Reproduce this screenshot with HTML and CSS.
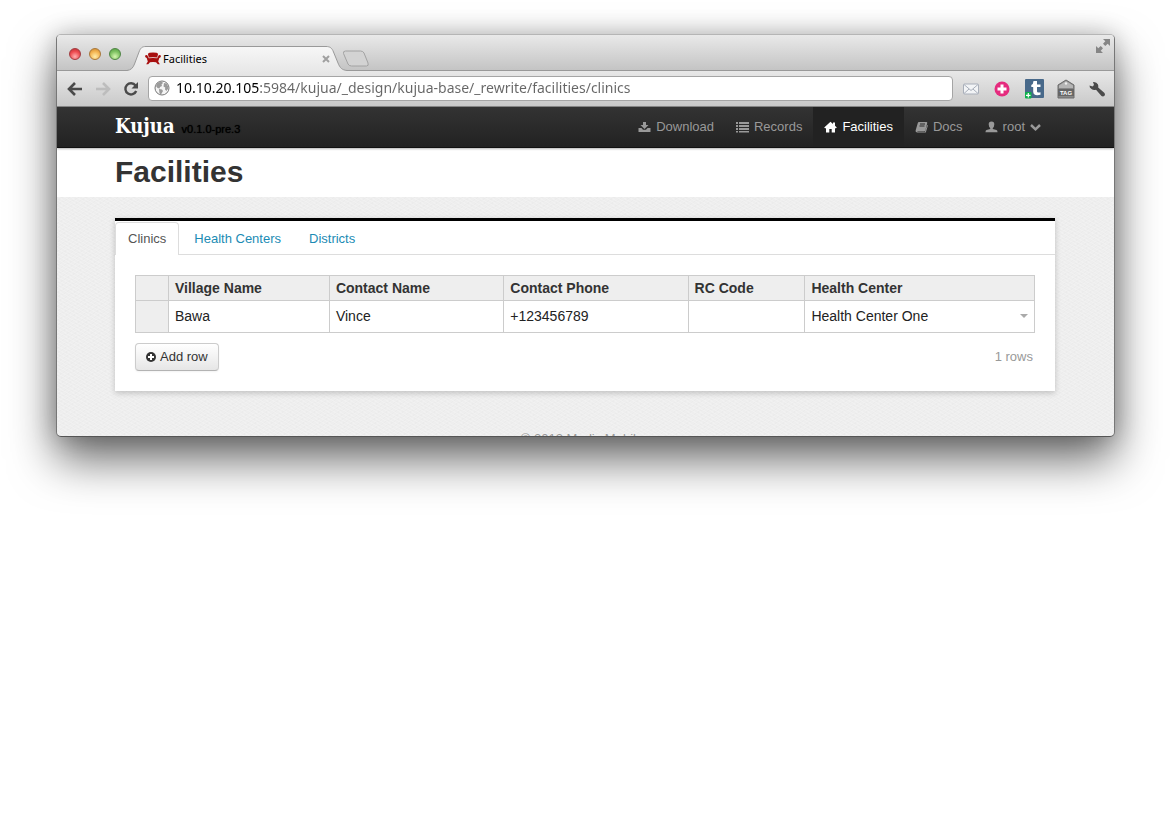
FILE: index.html
```html
<!DOCTYPE html>
<html lang="en">
<head>
<meta charset="utf-8">
<title>Facilities</title>
<link rel="stylesheet" href="styles.css">
</head>
<body>
<div class="window">
  <div class="titlebar">
    <div class="lights">
      <button class="light red" aria-label="Close window"></button>
      <button class="light yellow" aria-label="Minimize window"></button>
      <button class="light green" aria-label="Zoom window"></button>
    </div>
    <div class="tab">
      <svg class="tab-shape" width="220" height="25" viewBox="0 0 220 25" aria-hidden="true">
        <defs><linearGradient id="tabfill" x1="0" y1="0" x2="0" y2="1"><stop offset="0" stop-color="#f7f7f7"/><stop offset="1" stop-color="#e8e8e8"/></linearGradient></defs>
        <path d="M0 24.500C4 24 6 22 7.500 18L12 6C13.500 2 15 .5 19 .5H199C203 .5 205 2 206.500 6L211 17C213 22 215 24 220 24.500V25H0Z" fill="url(#tabfill)"/>
        <path d="M0 24.500C4 24 6 22 7.500 18L12 6C13.500 2 15 .5 19 .5H199C203 .5 205 2 206.500 6L211 17C213 22 215 24 220 24.500" fill="none" stroke="#999"/>
      </svg>
      <svg class="favicon" width="16" height="13" viewBox="0 0 16 13" aria-hidden="true">
        <path fill="#a81010" d="M3 2.500Q3 1 4.500 .8Q8 .2 11.500 .8Q13 1 13 2.500L12.200 5.500Q8 4.800 3.800 5.500Z"/>
        <path fill="#a81010" d="M0 4Q.5 2.800 2.300 3.200L3.800 6.300Q8 5.500 12.200 6.300L13.700 3.200Q15.500 2.800 16 4Q16 5.500 14.300 6L13.200 9.500L14.800 12.300H12.800L11 10.300Q8 9.700 5 10.300L3.200 12.300H1.200L2.800 9.500L1.700 6Q0 5.500 0 4Z"/>
      </svg>
      <span class="tab-title">Facilities</span>
      <button class="tab-close" aria-label="Close tab"><svg width="8" height="8" viewBox="0 0 8 8"><path d="M1 1L7 7M7 1L1 7" stroke="#a0a0a0" stroke-width="2"/></svg></button>
    </div>
    <button class="newtab" aria-label="New tab"><svg width="28" height="17" viewBox="0 0 28 17"><path d="M3.500 1H18.500Q21 1 22 3L26 13Q27 16 24.500 16H9.500Q7 16 6 14L1.500 3.500Q1 1 3.500 1Z" fill="#d3d3d3" stroke="#a2a2a2"/></svg></button>
    <button class="fullscreen" aria-label="Full screen"><svg width="16" height="16" viewBox="0 0 16 16" fill="#858585"><path d="M8 1H15V8L12.700 5.700L10.300 8L8 5.700L10.300 3.300Z"/><path d="M1 8L3.300 10.300L5.700 8L8 10.300L5.700 12.700L8 15H1Z"/></svg></button>
  </div>

  <div class="toolbar">
    <div class="history">
      <button aria-label="Back"><svg width="16" height="14" viewBox="0 0 16 14" fill="none" stroke="#4a4a4a" stroke-width="2.600"><path d="M8 1L2 7L8 13M2 7H15"/></svg></button>
      <button aria-label="Forward"><svg width="16" height="14" viewBox="0 0 16 14" fill="none" stroke="#bdbdbd" stroke-width="2.600"><path d="M8 1L14 7L8 13M14 7H1"/></svg></button>
      <button aria-label="Reload"><svg width="16" height="16" viewBox="0 0 16 16"><path d="M12.500 4.500A5.600 5.600 0 1 0 13.200 10" fill="none" stroke="#4a4a4a" stroke-width="2.400"/><path d="M15 1V7.500H8.500Z" fill="#4a4a4a"/></svg></button>
    </div>
    <div class="omnibox">
      <svg width="16" height="16" viewBox="0 0 16 16" aria-hidden="true"><circle cx="8" cy="8" r="7" fill="#f4f4f4" stroke="#777"/><path d="M3 3.500Q5 1.500 8 1.800L9 3L7.500 4.500L8 6L6 7L5.500 8.500L3.500 8L2 6ZM5 9L8 9.500L9 11L7 14.500L5.500 13.500ZM10 3L12.500 3.500L14 6L14.200 8.500L12.500 11L11 9.500L11.200 7.500L9.500 6.500Z" fill="#9b9b9b"/></svg>
      <input class="url" type="text" aria-label="Address" value="10.10.20.105:5984/kujua/_design/kujua-base/_rewrite/facilities/clinics">
    </div>
    <div class="extensions">
      <button aria-label="Mail"><svg width="18" height="18" viewBox="0 0 18 18"><rect x="1.500" y="4" width="15" height="10" rx="1" fill="#f2f4f6" stroke="#a9afba"/><path d="M2 4.500L9 10.500L16 4.500M2 13.500L7 9M16 13.500L11 9" fill="none" stroke="#a9afba"/></svg></button>
      <button aria-label="Add"><svg width="18" height="18" viewBox="0 0 18 18"><circle cx="9" cy="9" r="7.500" fill="#e52b7e"/><path d="M9 4.500V13.500M4.500 9H13.500" stroke="#fff" stroke-width="3"/></svg></button>
      <button aria-label="Share"><svg width="20" height="20" viewBox="0 0 20 20"><rect x="1" y="0" width="19" height="19" rx="1" fill="#48698a"/><path d="M9.500 2H13V5.500H16.500V8H13V12.500Q13 14 16.500 13.300V15.800Q9.200 17.500 9.200 12.500V8H7.300V6Q9.300 5.300 9.500 2Z" fill="#fff"/><rect x="1" y="13" width="6.500" height="6.500" rx="1" fill="#0db14b"/><path d="M4.300 14V18.500M2 16.300H6.500" stroke="#fff" stroke-width="1.200"/></svg></button>
      <button aria-label="Tag"><svg width="18" height="20" viewBox="0 0 18 20"><path d="M1 6L9 1L17 6V19H1Z" fill="#888" stroke="#6c6c6c"/><path d="M2 6.500L9 2L16 6.500V9H2Z" fill="#b5b5b5"/><circle cx="9" cy="4.500" r="1.200" fill="#eee"/><rect x="1" y="10" width="16" height="7" fill="#666"/><text x="9" y="16" text-anchor="middle" class="tag-label">TAG</text></svg></button>
      <button aria-label="Settings"><svg width="18" height="18" viewBox="0 0 18 18"><path d="M1.500 5.500L4.500 6.500L6 5L5 2Q8.500 1.500 10 4.500Q10.500 6 10.200 7.500L16.500 13Q17.500 14.500 16.500 15.800Q15 17 13.500 16L8 9.700Q5.500 10.500 3.500 9Q1.300 7.500 1.500 5.500Z" fill="#4b4b4b"/></svg></button>
    </div>
  </div>

  <header class="navbar">
    <div class="brand-group"><a class="brand" href="#">Kujua</a><span class="version">v0.1.0-pre.3</span></div>
    <nav class="nav">
      <a href="#"><svg width="13" height="12" viewBox="0 0 13 12"><path d="M5 1H8V4H10.500L6.500 8L2.500 4H5Z"/><path d="M.5 7H3.500L5 8.700H8L9.500 7H12.500V11H.5Z"/></svg>Download</a>
      <a href="#"><svg width="13" height="12" viewBox="0 0 13 12"><path d="M0 1H2V3H0ZM3 1H13V3H3ZM0 4H2V6H0ZM3 4H13V6H3ZM0 7H2V9H0ZM3 7H13V9H3ZM0 10H2V11.500H0ZM3 10H13V11.500H3Z"/></svg>Records</a>
      <a href="#" class="active"><svg width="13" height="12" viewBox="0 0 13 12"><path d="M6.500 .8L9 3V1.500H11V4.800L12.800 6.500L12 7.200H11V11.500H7.700V8H5.300V11.500H2V7.200H1L.2 6.500Z"/></svg>Facilities</a>
      <a href="#"><svg width="13" height="12" viewBox="0 0 13 12"><path d="M4 1H11.500Q12.500 1 12.200 2.200L10.300 9.500Q10 10.300 9 10.300H2.500L2.300 10.800H10L12.200 4L12.900 4.500L10.800 11.500H2Q.2 11.200 .6 9.500L2.800 2Q3 1 4 1Z"/><path d="M5 3H10M4.500 5H9.500" stroke="#2b2b2b"/></svg>Docs</a>
      <a href="#"><svg width="13" height="12" viewBox="0 0 13 12"><path d="M6.500 .5Q9.500 .5 9.300 3.500Q9.200 6 7.800 7V8L11.500 9Q12.600 9.500 12.500 11.200H.5Q.4 9.500 1.500 9L5.200 8V7Q3.800 6 3.700 3.500Q3.500 .5 6.500 .5Z"/></svg>root<svg width="11" height="12" viewBox="0 0 11 12"><path d="M1 4L5.500 8.300L10 4" class="chevron"/></svg></a>
    </nav>
  </header>

  <div class="page-header"><h1>Facilities</h1></div>

  <main class="content">
    <section class="card">
      <nav class="tabs">
        <a href="#" class="current">Clinics</a>
        <a href="#">Health Centers</a>
        <a href="#">Districts</a>
      </nav>
      <div class="card-body">
        <table class="grid">
          <colgroup><col class="c-handle"><col class="c-village"><col class="c-contact"><col class="c-phone"><col class="c-code"><col class="c-center"></colgroup>
          <thead><tr><th></th><th>Village Name</th><th>Contact Name</th><th>Contact Phone</th><th>RC Code</th><th>Health Center</th></tr></thead>
          <tbody><tr><th></th><td>Bawa</td><td>Vince</td><td>+123456789</td><td></td><td><div class="picker"><select aria-label="Health Center"><option>Health Center One</option></select><svg width="8" height="4" viewBox="0 0 8 4" aria-hidden="true"><path d="M0 0H8L4 4Z" fill="#aaa"/></svg></div></td></tr></tbody>
        </table>
        <div class="card-foot">
          <button class="btn"><svg width="10" height="10" viewBox="0 0 10 10" aria-hidden="true"><circle cx="5" cy="5" r="5" fill="#333"/><path d="M5 2V8M2 5H8" stroke="#fff" stroke-width="2"/></svg>Add row</button>
          <span class="count">1 rows</span>
        </div>
      </div>
    </section>
  </main>
  <footer class="footer">© 2012 Medic Mobile</footer>
</div>
</body>
</html>
```
FILE: styles.css
```css
* { box-sizing: border-box; }
body {
  margin: 0;
  padding: 34px 56px 80px;
  background: #fff;
  color: #333;
  font: 13px/18px "Liberation Sans", Arial, sans-serif;
}
button { margin: 0; padding: 0; border: 0; background: none; font: inherit; color: inherit; display: flex; align-items: center; justify-content: center; }
a { color: inherit; text-decoration: none; }
svg { display: block; flex: none; }

.window {
  border: 1px solid #777;
  border-top-color: #b5b5b5;
  border-bottom-color: #555;
  border-radius: 5px;
  overflow: hidden;
  background-color: #eee;
  background-image:
    repeating-linear-gradient(30deg, rgba(255,255,255,.2) 0 1px, transparent 1px 3px),
    repeating-linear-gradient(-30deg, rgba(0,0,0,.01) 0 1px, transparent 1px 4px);
  box-shadow: 0 23px 46px rgba(0,0,0,.58), 0 0 24px rgba(0,0,0,.22);
}

/* Browser chrome */
.titlebar {
  height: 36px;
  display: flex;
  align-items: flex-end;
  background: linear-gradient(#e9e9e9, #c4c4c4);
  border-bottom: 1px solid #999;
}
.lights { display: flex; gap: 8px; padding: 0 10px 10px 12px; }
.light { width: 12px; height: 12px; border-radius: 50%; border: 1px solid #777; }
.red { background: radial-gradient(circle at 50% 75%, #ffb0b0, #ee4c50 55%, #b82a30); border-color: #a23c40; }
.yellow { background: radial-gradient(circle at 50% 75%, #ffedaa, #f4b552 55%, #c9832a); border-color: #a9783a; }
.green { background: radial-gradient(circle at 50% 75%, #d5f7b0, #7fc263 55%, #4e9a3d); border-color: #4f8544; }
.tab {
  position: relative;
  width: 211px;
  height: 25px;
  margin-bottom: -1px;
  padding: 0 12px 0 14px;
  display: flex;
  align-items: center;
  gap: 2px;
}
.tab-shape { position: absolute; left: -4px; top: 0; }
.favicon, .tab-title, .tab-close { position: relative; }
.tab-title { flex: 1; color: #000; font: 11px/16px "Noto Sans", sans-serif; }
.newtab { margin-bottom: 3px; }
.fullscreen { margin: 0 3px 16px auto; }

.toolbar {
  height: 36px;
  display: flex;
  align-items: center;
  padding: 0 8px 0 10px;
  gap: 9px;
  background: linear-gradient(#e8e8e8, #c9c9c9);
  border-bottom: 1px solid #888;
}
.history { display: flex; align-items: center; gap: 12px; }
.omnibox {
  flex: 1;
  height: 25px;
  display: flex;
  align-items: center;
  gap: 6px;
  padding: 0 5px 1px;
  background: #fff;
  border: 1px solid #a5a5a5;
  border-radius: 4px;
}
.url {
  flex: 1;
  min-width: 0;
  height: 20px;
  border: 0;
  padding: 0;
  outline: 0;
  font: 14px/20px "Noto Sans", sans-serif;
  background: linear-gradient(90deg, #000 84px, #666 84px);
  -webkit-background-clip: text;
  background-clip: text;
  -webkit-text-fill-color: transparent;
}
.extensions { display: flex; align-items: center; gap: 13px; }
.tag-label { font: bold 6px "Liberation Sans", sans-serif; fill: #fff; }

/* Application */
.navbar {
  height: 41px;
  display: flex;
  justify-content: space-between;
  padding: 0 62px 0 58px;
  background: linear-gradient(#333, #222);
  color: #999;
  border-bottom: 1px solid #111;
  box-shadow: 0 1px 2px rgba(0,0,0,.3);
  position: relative;
}
.brand-group { display: flex; align-items: baseline; gap: 7px; line-height: 38px; }
.brand { color: #fff; font-family: "DejaVu Serif Condensed", "DejaVu Serif", serif; font-weight: bold; font-size: 20px; }
.version { color: #000; font-size: 11px; text-shadow: 0 0 1px #000; }
.nav { display: flex; }
.nav a { display: flex; align-items: center; gap: 5px; padding: 0 11px 1px; }
.nav svg { fill: currentColor; }
.nav .chevron { fill: none; stroke: currentColor; stroke-width: 2.5; }
.nav .active { background: #222; color: #fff; }

.page-header { background: #fff; padding: 6px 58px 7px; }
h1 { margin: 0; font-size: 30px; line-height: 36px; color: #333; }
.content { padding: 21px 59px 0 58px; }
.card { background: #fff; border-top: 3px solid #000; box-shadow: 0 2px 6px rgba(0,0,0,.2); }
.tabs { display: flex; padding-top: 1px; border-bottom: 1px solid #ddd; }
.tabs a { height: 32px; padding: 0 12px; line-height: 32px; border: 1px solid transparent; border-bottom: 0; color: #1b8bb4; margin-right: 2px; }
.tabs .current { margin-bottom: -1px; height: 33px; border-color: #ddd; border-radius: 4px 4px 0 0; background: #fff; color: #555; }
.card-body { padding: 20px; }
.grid { width: 100%; table-layout: fixed; border-collapse: collapse; font-size: 14px; line-height: 20px; color: #222; }
.grid th, .grid td { border: 1px solid #ccc; padding: 0 6px; text-align: left; }
.grid th { background: #eee; color: #333; }
.grid thead th { height: 25px; }
.grid tbody td { height: 32px; padding-bottom: 2px; }
.c-handle { width: 33px; }
.c-village { width: 17.9%; }
.c-contact { width: 19.4%; }
.c-phone { width: 20.5%; }
.c-code { width: 13%; }
.picker { display: flex; align-items: center; }
.picker select { flex: 1; min-width: 0; appearance: none; border: 0; padding: 0; background: none; font: inherit; color: inherit; }
.card-foot { display: flex; justify-content: space-between; align-items: center; padding: 10px 2px 0 0; }
.btn {
  gap: 4px;
  height: 28px;
  padding: 0 10px;
  border: 1px solid #ccc;
  border-bottom-color: #b3b3b3;
  border-radius: 4px;
  background: linear-gradient(#fff, #e6e6e6);
  box-shadow: 0 1px 2px rgba(0,0,0,.05);
}
.count { color: #999; }
.footer { margin-top: 39px; height: 6px; padding-right: 7px; overflow: hidden; text-align: center; color: #999; }
```
